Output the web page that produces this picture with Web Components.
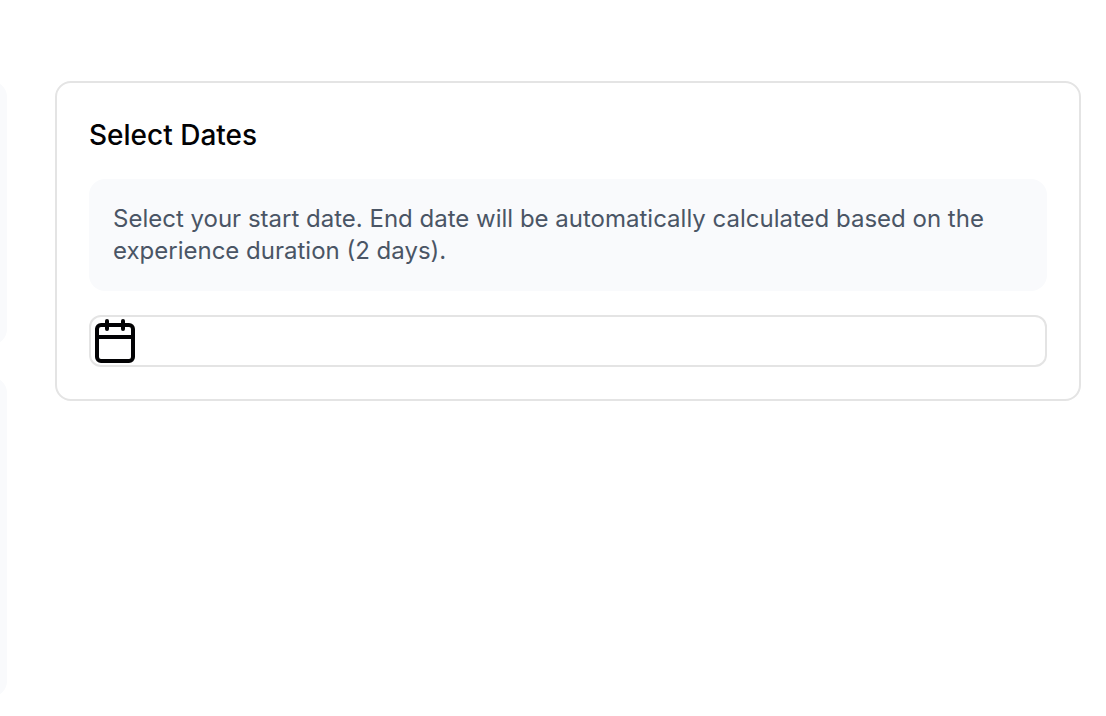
<!DOCTYPE html>
<html lang="en">
<head>
<meta charset="utf-8">
<title>Select Dates</title>
<style>
html, body { margin: 0; height: 100%; }
body { background: #fff; color: #020204; font-family: Inter, sans-serif; font-optical-sizing: none; -webkit-font-smoothing: antialiased; overflow: hidden; }
</style>
</head>
<body>
<booking-page>
  <side-panel slot="side" style="--h:264px"></side-panel>
  <side-panel slot="side" style="--h:320px"></side-panel>
  <date-card>
    <span slot="title">Select Dates</span>
    <info-note>Select your start date. End date will be automatically calculated based on the experience duration (2 days).</info-note>
    <date-field></date-field>
  </date-card>
</booking-page>
<script>
const define = (name, markup) => customElements.define(name, class extends HTMLElement {
  constructor() {
    super();
    this.attachShadow({ mode: "open" }).innerHTML = markup;
  }
});

define("booking-page", `
  <style>
    :host { display: grid; grid-template-columns: 7px 1026px; column-gap: 48px; align-items: start; box-sizing: border-box; height: 716px; padding-top: 81px; }
    .side { display: flex; flex-direction: column; align-items: flex-end; gap: 32px; }
  </style>
  <div class="side"><slot name="side"></slot></div>
  <slot></slot>`);

define("side-panel", `
  <style>:host { display: block; flex: none; width: 64px; height: var(--h); background: #f9fafc; border-radius: 16px; }</style>`);

define("date-card", `
  <style>
    :host { display: flex; flex-direction: column; gap: 24px; box-sizing: border-box; padding: 32px; border: 2px solid #e4e4e4; border-radius: 16px; }
    h3 { margin: 0; font-size: 28px; line-height: 40px; font-weight: 500; }
  </style>
  <h3><slot name="title"></slot></h3>
  <slot></slot>`);

define("info-note", `
  <style>:host { display: block; padding: 24px; border-radius: 16px; background: #f9fafc; color: #4a5565; font-size: 24px; line-height: 32px; }</style>
  <slot></slot>`);

define("date-field", `
  <style>
    :host { display: flex; border: 2px solid #e4e4e4; border-radius: 12px; }
    svg { display: block; width: 48px; height: 48px; }
  </style>
  <svg viewBox="0 0 24 24" fill="none" stroke="currentColor" stroke-width="2" stroke-linecap="round" stroke-linejoin="round">
    <path d="M8 2v4"/><path d="M16 2v4"/><rect width="18" height="18" x="3" y="4" rx="2"/><path d="M3 10h18"/>
  </svg>`);
</script>
</body>
</html>
